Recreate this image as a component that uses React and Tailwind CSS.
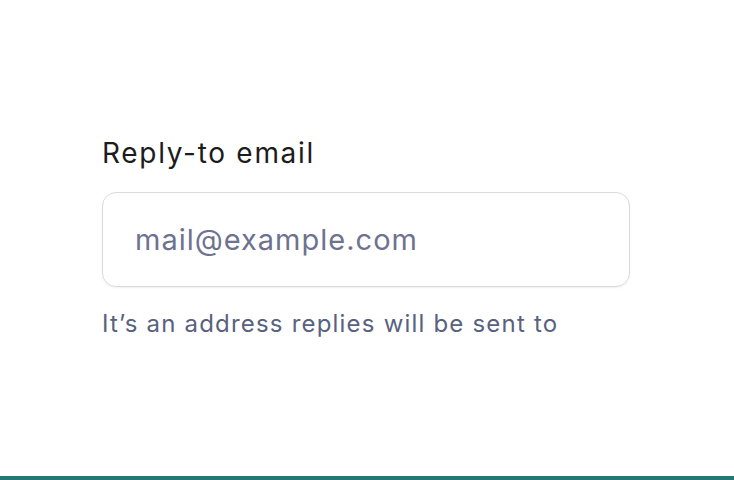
export default function App() {
  return (
    <div className="w-[734px] h-[480px] bg-white flex flex-col" style={{ fontFamily: "Inter, 'Noto Sans', sans-serif" }}>
      <div className="flex-1 flex flex-col pl-[102px] pt-[135px]">
        <label className="text-[28px] leading-[36px] tracking-[1.7px] text-[#1c1c1c]">Reply-to email</label>
        <div className="mt-[21px] w-[528px] h-[95px] rounded-[14px] border border-[#d9d9e0] shadow-[0_1px_2px_rgba(0,0,0,0.06)] flex items-center pl-[32px]">
          <span className="text-[29px] tracking-[1px] text-[#6e7290]">mail@example.com</span>
        </div>
        <p className="mt-[20px] text-[24px] leading-[34px] tracking-[1.2px] text-[#596180]">It’s an address replies will be sent to</p>
      </div>
      <div className="h-[4px] bg-[#247a72]"></div>
    </div>
  );
}
